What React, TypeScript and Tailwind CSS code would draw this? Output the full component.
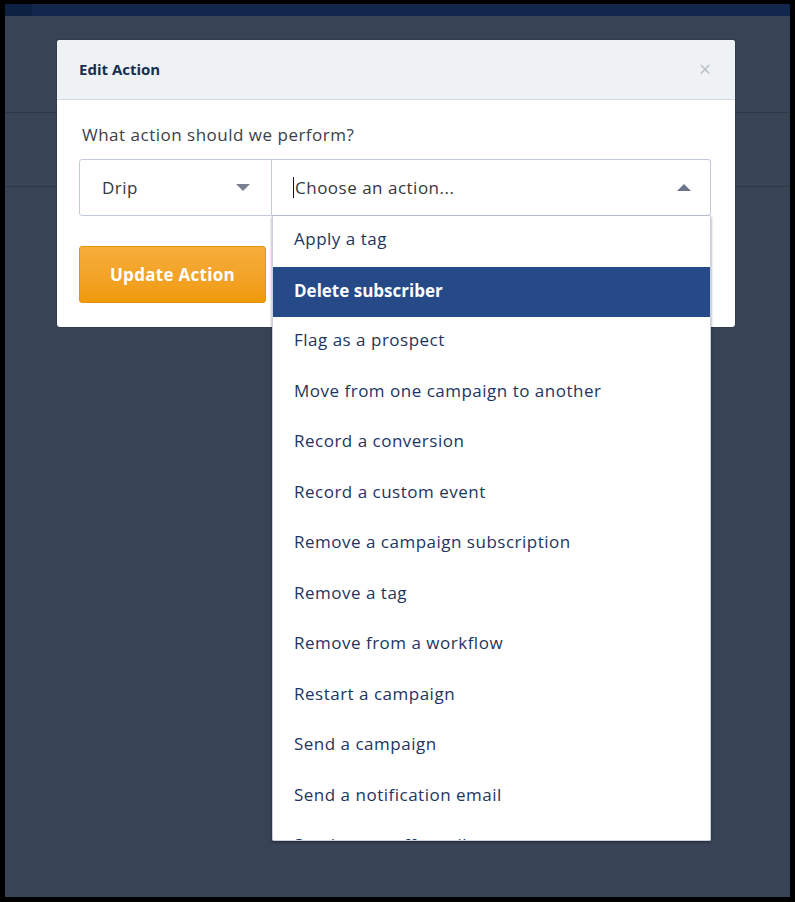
import React from "react";

const actions = [
  "Apply a tag",
  "Delete subscriber",
  "Flag as a prospect",
  "Move from one campaign to another",
  "Record a conversion",
  "Record a custom event",
  "Remove a campaign subscription",
  "Remove a tag",
  "Remove from a workflow",
  "Restart a campaign",
  "Send a campaign",
  "Send a notification email",
  "Send a one-off email",
];

const App = () => {
  return (
    <div className="w-[795px] h-[902px] bg-black pl-[5px] pr-[5px] pt-[4px] pb-[5px]" style={{ fontFamily: '"Open Sans", sans-serif' }}>
      <div className="relative w-full h-full bg-[#384455] overflow-hidden">
        {/* page behind the modal */}
        <div className="flex h-[12px]">
          <div className="w-[27px] bg-[#0d2143]" />
          <div className="flex-1 bg-[#11264a]" />
        </div>
        <div className="h-[97px] border-b border-[#2c3747]" />
        <div className="h-[74px] border-b border-[#2c3747]" />

        {/* modal */}
        <div className="absolute left-[52px] top-[36px] w-[678px] bg-white rounded-[3px] shadow-[0_0_2px_rgba(0,0,0,0.4)]">
          <div className="h-[60px] bg-[#eff2f5] border-b border-[#d6dbe1] rounded-t-[3px] flex items-center justify-between pl-[22px] pr-[24px]">
            <span className="text-[15px] font-bold text-[#162f52]">Edit Action</span>
            <span className="text-[21px] leading-none text-[#b9bec5]">×</span>
          </div>
          <div className="pl-[22px] pr-[24px] pt-[23px] pb-[24px]">
            <div className="text-[17px] leading-[24px] tracking-[0.5px] text-[#3b4047] ml-[3px]">What action should we perform?</div>
            <div className="flex mt-[12px] h-[57px]">
              <div className="w-[193px] border border-[#c3cadb] rounded-l-[3px] flex items-center justify-between pl-[22px] pr-[21px]">
                <span className="text-[17px] tracking-[0.5px] text-[#333840]">Drip</span>
                <span className="w-0 h-0 border-l-[7px] border-r-[7px] border-t-[7px] border-l-transparent border-r-transparent border-t-[#7a8090]" />
              </div>
              <div className="relative flex-1">
                <div className="h-full border border-l-0 border-[#c3cadb] rounded-r-[3px] flex items-center justify-between pl-[21px] pr-[19px]">
                  <span className="flex items-center text-[17px] tracking-[0.5px] text-[#333840]">
                    <span className="w-[1px] h-[21px] bg-[#111] mr-[1px]" />
                    Choose an action...
                  </span>
                  <span className="w-0 h-0 border-l-[7px] border-r-[7px] border-b-[7px] border-l-transparent border-r-transparent border-b-[#6b7489]" />
                </div>
                <div className="absolute left-0 right-0 top-full h-[625px] overflow-hidden bg-white border border-t-0 border-[#c9cfdc] rounded-b-[2px] shadow-[0_1px_3px_rgba(0,0,0,0.45)] z-10">
                  {actions.map((a) => (
                    <div
                      key={a}
                      className={
                        a === "Delete subscriber"
                          ? "h-[50.5px] flex items-center pl-[21px] pb-[2px] text-[17px] font-bold text-white bg-[#264a87]"
                          : "h-[50.5px] flex items-center pl-[21px] pb-[5px] text-[17px] tracking-[0.5px] text-[#1d3561]"
                      }
                    >
                      {a}
                    </div>
                  ))}
                </div>
              </div>
            </div>
            <button className="mt-[30px] w-[187px] h-[57px] rounded-[3px] bg-gradient-to-b from-[#f6ad3a] to-[#f09a08] border border-[#e39312] text-white text-[17px] tracking-[0.3px] font-bold">
              Update Action
            </button>
          </div>
        </div>
      </div>
    </div>
  );
};

export default App;
